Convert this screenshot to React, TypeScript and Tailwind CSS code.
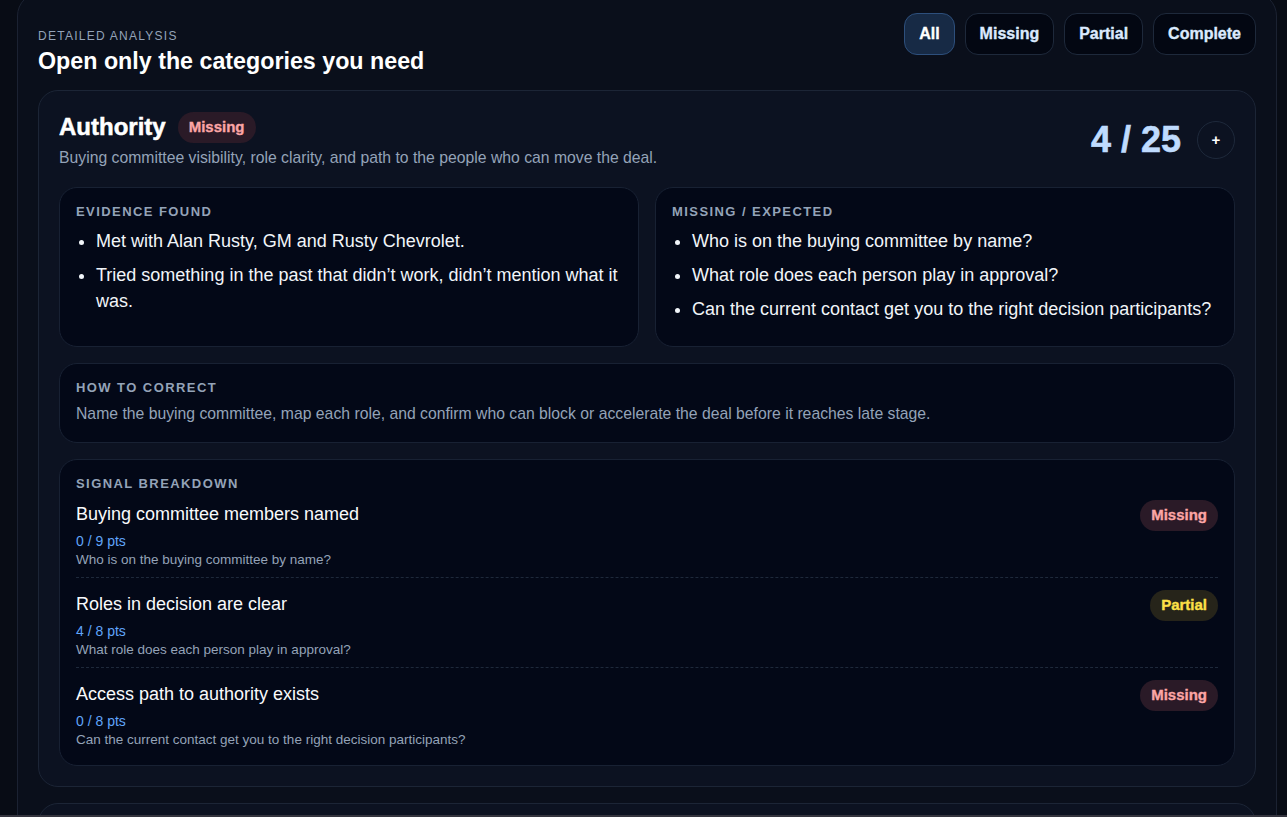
import { useState } from 'react'

type Status = 'Missing' | 'Partial' | 'Complete'

interface Signal {
  title: string
  earned: number
  max: number
  question: string
  status: Status
}

const filters = ['All', 'Missing', 'Partial', 'Complete']

const evidence = [
  'Met with Alan Rusty, GM and Rusty Chevrolet.',
  'Tried something in the past that didn’t work, didn’t mention what it was.',
]

const expected = [
  'Who is on the buying committee by name?',
  'What role does each person play in approval?',
  'Can the current contact get you to the right decision participants?',
]

const signals: Signal[] = [
  { title: 'Buying committee members named', earned: 0, max: 9, question: 'Who is on the buying committee by name?', status: 'Missing' },
  { title: 'Roles in decision are clear', earned: 4, max: 8, question: 'What role does each person play in approval?', status: 'Partial' },
  { title: 'Access path to authority exists', earned: 0, max: 8, question: 'Can the current contact get you to the right decision participants?', status: 'Missing' },
]

function StatusBadge({ status }: { status: Status }) {
  const tone =
    status === 'Missing'
      ? 'bg-[#2a1a27] text-[#fca5a5]'
      : status === 'Partial'
        ? 'bg-[#26241a] text-[#fde047]'
        : 'bg-[#0f2a22] text-[#86efac]'

  return (
    <span
      className={`inline-flex h-[31px] items-center rounded-full px-[11px] text-[15px] font-bold [-webkit-text-stroke:0.35px_currentColor] ${tone}`}
    >
      {status}
    </span>
  )
}

function SectionLabel({ children }: { children: React.ReactNode }) {
  return <div className="text-[13px] font-bold uppercase leading-4 tracking-[0.11em] text-[#94a3b8]">{children}</div>
}

function BulletCard({ label, items }: { label: string; items: string[] }) {
  return (
    <div className="rounded-[18px] border border-[#182133] bg-[#030817] p-4">
      <SectionLabel>{label}</SectionLabel>
      <ul className="mt-2 list-disc pl-5 text-[18px] leading-[26px] text-[#f1f5f9]">
        {items.map((item) => (
          <li key={item} className="mb-2">
            {item}
          </li>
        ))}
      </ul>
    </div>
  )
}

export default function App() {
  const [active, setActive] = useState('All')
  const [open, setOpen] = useState(true)

  return (
    <div className="flex h-[817px] flex-col overflow-hidden bg-[#080c15] font-['Liberation_Sans',Arial,sans-serif]">
      <div className="min-h-0 flex-1 overflow-hidden pl-[17px] pr-[10px]">
        <section className="-mt-2 rounded-[24px] border border-[#1b2232] bg-[#0a0f1b] px-5 pt-5 pb-6">
          <header className="flex items-start justify-between">
            <div className="pt-[15px]">
              <div className="text-[12px] leading-4 tracking-[0.105em] text-[#94a3b8]">DETAILED ANALYSIS</div>
              <h2 className="mt-0.5 text-[23.25px] font-bold leading-[30px] text-white">Open only the categories you need</h2>
            </div>
            <div className="flex gap-2.5">
              {filters.map((filter) => (
                <button
                  key={filter}
                  type="button"
                  onClick={() => setActive(filter)}
                  className={`h-[42px] rounded-[13px] border px-3.5 text-[16px] font-bold [-webkit-text-stroke:0.35px_currentColor] ${
                    active === filter
                      ? 'border-[#2d4f7c] bg-[#172a45] text-white'
                      : 'border-[#1e293b] bg-[#030712] text-[#dbeafe]'
                  }`}
                >
                  {filter}
                </button>
              ))}
            </div>
          </header>

          <article className="mt-[14px] rounded-[20px] border border-[#1c2536] bg-[#0c1221] p-5">
            <div className="flex items-center justify-between">
              <div>
                <div className="flex items-center gap-3">
                  <h3 className="text-[24px] font-extrabold leading-8 text-white [-webkit-text-stroke:0.5px_currentColor]">
                    Authority
                  </h3>
                  <StatusBadge status="Missing" />
                </div>
                <p className="mt-1 text-[15.75px] leading-[22px] text-[#94a3b8]">
                  Buying committee visibility, role clarity, and path to the people who can move the deal.
                </p>
              </div>
              <div className="flex items-center gap-4">
                <div className="text-[36px] font-extrabold leading-none text-[#bfdbfe] [-webkit-text-stroke:0.6px_currentColor]">
                  4 / 25
                </div>
                <button
                  type="button"
                  onClick={() => setOpen((previous) => !previous)}
                  className="flex h-[38px] w-[38px] items-center justify-center rounded-full border border-[#1e293b] text-[15px] font-bold text-white"
                >
                  {open ? '+' : '−'}
                </button>
              </div>
            </div>

            <div className="mt-[18px] grid grid-cols-2 gap-4">
              <BulletCard label="Evidence found" items={evidence} />
              <BulletCard label="Missing / Expected" items={expected} />
            </div>

            <div className="mt-4 rounded-[18px] border border-[#182133] bg-[#030817] p-4">
              <SectionLabel>How to correct</SectionLabel>
              <p className="mt-1.5 text-[15.75px] leading-6 text-[#94a3b8]">
                Name the buying committee, map each role, and confirm who can block or accelerate the deal before it reaches late stage.
              </p>
            </div>

            <div className="mt-4 rounded-[18px] border border-[#182133] bg-[#030817] p-4">
              <SectionLabel>Signal breakdown</SectionLabel>
              {signals.map((signal, index) => (
                <div
                  key={signal.title}
                  className={`flex items-start justify-between gap-4 ${index === 0 ? 'pt-2' : 'pt-3'} ${
                    index === signals.length - 1 ? '' : 'border-b border-dashed border-[#1e293b] pb-2'
                  }`}
                >
                  <div>
                    <div className="text-[18px] leading-7 text-[#f8fafc]">{signal.title}</div>
                    <div className="mt-[3px] text-[14px] leading-5 text-[#60a5fa]">
                      {signal.earned} / {signal.max} pts
                    </div>
                    <div className="text-[13.5px] leading-[18px] text-[#94a3b8]">{signal.question}</div>
                  </div>
                  <StatusBadge status={signal.status} />
                </div>
              ))}
            </div>
          </article>

          <article className="mt-4 h-[120px] rounded-[20px] border border-[#1c2536] bg-[#0c1221]" />
        </section>
      </div>
      <div className="h-[2px] shrink-0 bg-[#34343e]" />
    </div>
  )
}
